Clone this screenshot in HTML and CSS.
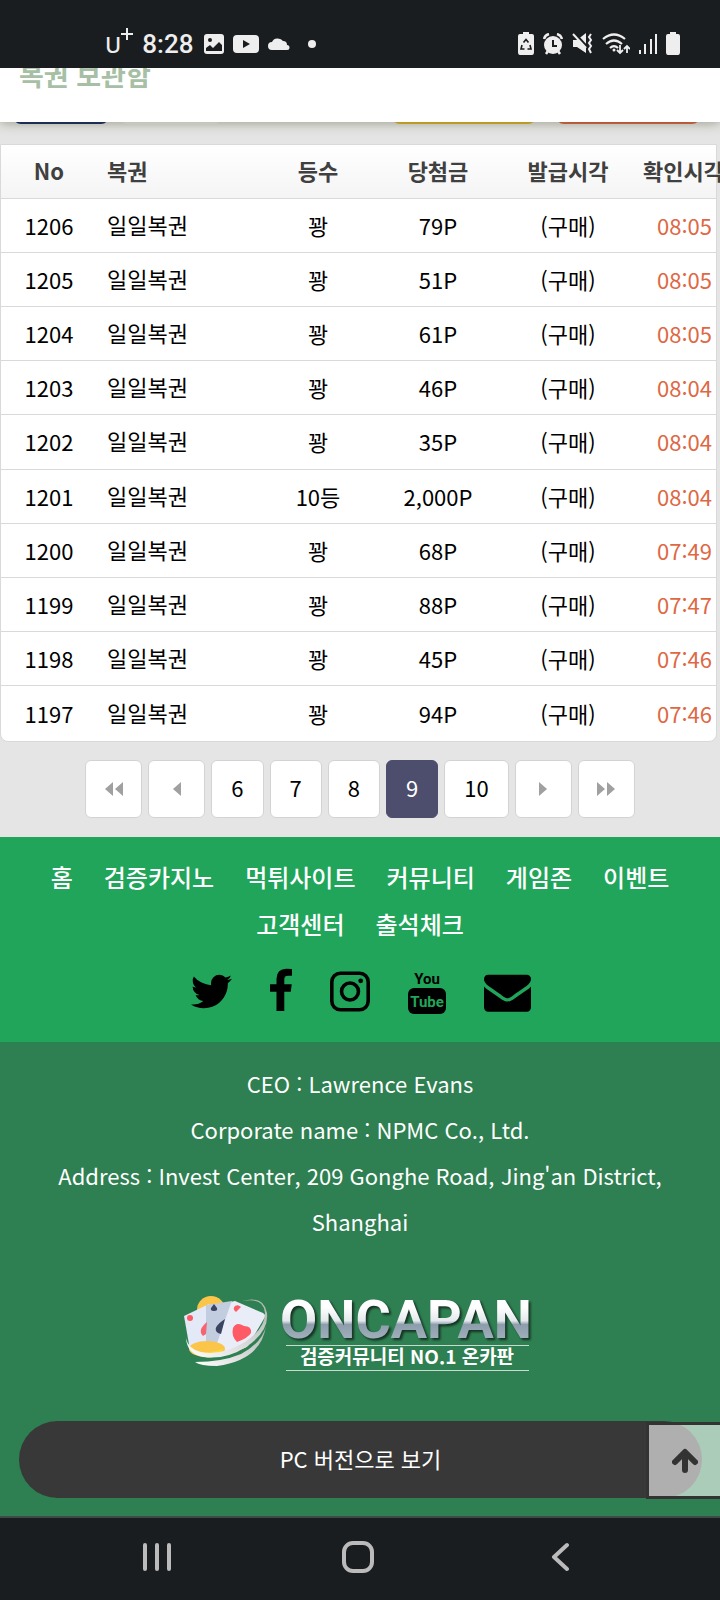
FILE: index.html
```html
<!DOCTYPE html>
<html lang="ko">
<head>
<meta charset="utf-8">
<meta name="viewport" content="width=device-width, initial-scale=1">
<title>복권 보관함</title>
<link rel="stylesheet" href="styles.css">
</head>
<body>
<div class="status">
  <div class="status-side">
    <span class="carrier">U<svg width="12" height="12" viewBox="0 0 12 12"><path d="M6 0v12M0 6h12" stroke="currentColor" stroke-width="2"/></svg></span>
    <span class="clock">8:28</span>
    <svg width="20" height="20" viewBox="0 0 20 20"><rect width="20" height="20" rx="3" fill="#eee"/><circle cx="6" cy="6" r="2" fill="#191d20"/><path d="M2 17v-3l4-3 3 3 6-6 3 3v6z" fill="#191d20"/></svg>
    <svg width="26" height="18" viewBox="0 0 26 18"><rect width="26" height="18" rx="4" fill="#eee"/><path d="M10 5l7 4-7 4z" fill="#191d20"/></svg>
    <svg width="23" height="14" viewBox="0 0 23 14"><path d="M4 13a4 4 0 0 1 0-8 6 5 0 0 1 11-1 4 4 0 0 1 4 4 2.500 2.500 0 0 1 0 5z" fill="#eee"/></svg>
    <span class="dot"></span>
  </div>
  <div class="status-side status-right">
    <svg width="16" height="23" viewBox="0 0 16 23"><path d="M5 2V0h6v2h3q2 0 2 2v16q0 3-2 3H2q-2 0-2-3V4q0-2 2-2z" fill="#eee"/><path d="M5.500 10.500L8 7.500l2.500 3M12 13l1 4h-3.500M6.500 17H3l1-4" fill="none" stroke="#191d20" stroke-width="1.600"/></svg>
    <svg width="20" height="22" viewBox="0 0 20 22"><circle cx="10" cy="12" r="9" fill="#eee"/><path d="M1 6q1-4 5-5M19 6q-1-4-5-5M5 18l-2 3M15 18l2 3" stroke="#eee" stroke-width="2.500" fill="none"/><path d="M10 7v6h4" stroke="#191d20" stroke-width="2" fill="none"/></svg>
    <svg width="21" height="21" viewBox="0 0 21 21"><path d="M1 7h4l9-7v20l-9-6H1z" fill="#eee"/><path d="M2 0l13 14" stroke="#191d20" stroke-width="3"/><path d="M1 1l13 14" stroke="#eee" stroke-width="2"/><path d="M19 1l-2 3 2 3-2 3 2 3-2 3 2 4" stroke="#eee" stroke-width="2" fill="none"/></svg>
    <svg width="28" height="22" viewBox="0 0 28 22"><path d="M1 6q11-9 22 0M4 11q8-7 16 0M8 15q4-4 8 0" stroke="#eee" stroke-width="2.200" fill="none"/><circle cx="12" cy="17" r="1.500" fill="#eee"/><path d="M18 12v8M15 17l3 3 3-3M25 20v-7M22 16l3-3 3 3" stroke="#eee" stroke-width="1.800" fill="none"/></svg>
    <svg width="18" height="20" viewBox="0 0 18 20"><path d="M1 16v4M6 10v10M12 5v15M17 0v20" stroke="#eee" stroke-width="2"/></svg>
    <svg width="14" height="23" viewBox="0 0 14 23"><path d="M4 2V0h6v2h2q2 0 2 2v16q0 3-2 3H2q-2 0-2-3V4q0-2 2-2z" fill="#eee"/></svg>
  </div>
</div>

<header class="topbar">
  <div class="topbar-clip"><h1 class="title">복권 보관함</h1></div>
</header>

<main class="content">
  <div class="tabs" aria-hidden="true">
    <span class="tab tab-navy"></span>
    <span class="tab tab-plain"></span>
    <span class="tab tab-yellow"></span>
    <span class="tab tab-red"></span>
  </div>

  <table class="tickets">
    <thead>
      <tr><th class="c-no">No</th><th class="c-name">복권</th><th class="c-rank">등수</th><th class="c-prize">당첨금</th><th class="c-issued">발급시각</th><th class="c-time">확인시각</th></tr>
    </thead>
    <tbody>
      <tr><td>1206</td><td class="c-name">일일복권</td><td>꽝</td><td>79P</td><td>(구매)</td><td class="c-time">08:05</td></tr>
      <tr><td>1205</td><td class="c-name">일일복권</td><td>꽝</td><td>51P</td><td>(구매)</td><td class="c-time">08:05</td></tr>
      <tr><td>1204</td><td class="c-name">일일복권</td><td>꽝</td><td>61P</td><td>(구매)</td><td class="c-time">08:05</td></tr>
      <tr><td>1203</td><td class="c-name">일일복권</td><td>꽝</td><td>46P</td><td>(구매)</td><td class="c-time">08:04</td></tr>
      <tr><td>1202</td><td class="c-name">일일복권</td><td>꽝</td><td>35P</td><td>(구매)</td><td class="c-time">08:04</td></tr>
      <tr><td>1201</td><td class="c-name">일일복권</td><td>10등</td><td>2,000P</td><td>(구매)</td><td class="c-time">08:04</td></tr>
      <tr><td>1200</td><td class="c-name">일일복권</td><td>꽝</td><td>68P</td><td>(구매)</td><td class="c-time">07:49</td></tr>
      <tr><td>1199</td><td class="c-name">일일복권</td><td>꽝</td><td>88P</td><td>(구매)</td><td class="c-time">07:47</td></tr>
      <tr><td>1198</td><td class="c-name">일일복권</td><td>꽝</td><td>45P</td><td>(구매)</td><td class="c-time">07:46</td></tr>
      <tr><td>1197</td><td class="c-name">일일복권</td><td>꽝</td><td>94P</td><td>(구매)</td><td class="c-time">07:46</td></tr>
    </tbody>
  </table>

  <nav class="pager" aria-label="페이지">
    <a class="page page-arrow" href="#" aria-label="처음"><svg width="18" height="14" viewBox="0 0 18 14"><path d="M8 0v14L0 7zM18 0v14L10 7z"/></svg></a>
    <a class="page page-arrow" href="#" aria-label="이전"><svg width="8" height="14" viewBox="0 0 8 14"><path d="M8 0v14L0 7z"/></svg></a>
    <a class="page" href="#">6</a>
    <a class="page" href="#">7</a>
    <a class="page" href="#">8</a>
    <a class="page page-current" href="#" aria-current="page">9</a>
    <a class="page" href="#">10</a>
    <a class="page page-arrow" href="#" aria-label="다음"><svg width="8" height="14" viewBox="0 0 8 14"><path d="M0 0v14l8-7z"/></svg></a>
    <a class="page page-arrow" href="#" aria-label="마지막"><svg width="18" height="14" viewBox="0 0 18 14"><path d="M0 0v14l8-7zM10 0v14l8-7z"/></svg></a>
  </nav>
</main>

<section class="sitemap">
  <nav class="links">
    <a href="#">홈</a><a href="#">검증카지노</a><a href="#">먹튀사이트</a><a href="#">커뮤니티</a><a href="#">게임존</a><a href="#">이벤트</a><a href="#">고객센터</a><a href="#">출석체크</a>
  </nav>
  <div class="social">
    <a href="#" aria-label="Twitter"><svg width="41" height="47" viewBox="108 0 1576 1792"><path d="M1684 408q-67 98-162 167 1 14 1 42 0 130-38 259.500t-115.500 248.500-184.500 210.500-258 146-323 54.500q-271 0-496-145 35 4 78 4 225 0 401-138-105-2-188-64.500t-114-159.500q33 5 61 5 43 0 85-11-112-23-185.500-111.500t-73.500-205.500v-4q68 38 146 41-66-44-105-115t-39-154q0-88 44-163 121 149 294.500 238.500t371.500 99.500q-8-38-8-74 0-134 94.500-228.500t228.500-94.500q140 0 236 102 109-21 205-78-37 115-142 178 93-10 186-50z"/></svg></a>
    <a href="#" aria-label="Facebook"><svg width="22" height="47" viewBox="479 0 864 1792"><path d="M1343 12v264h-157q-86 0-116 36t-30 108v189h293l-39 296h-254v759h-306v-759h-255v-296h255v-218q0-186 104-288.500t277-102.500q147 0 228 12z"/></svg></a>
    <a href="#" aria-label="Instagram"><svg width="40" height="47" viewBox="128 0 1536 1792"><rect x="197" y="197" width="1398" height="1398" rx="330" fill="none" stroke="#000" stroke-width="138"/><circle cx="896" cy="896" r="325" fill="none" stroke="#000" stroke-width="138"/><circle cx="1306" cy="486" r="92"/></svg></a>
    <a href="#" aria-label="YouTube"><svg class="yt" width="38" height="47" viewBox="0 0 38 47"><rect x="0" y="20" width="38" height="26" rx="6"/><text x="19" y="16" text-anchor="middle">You</text><text class="yt-tube" x="19" y="39" text-anchor="middle">Tube</text></svg></a>
    <a href="#" aria-label="E-mail"><svg width="47" height="47" viewBox="0 0 1792 1792"><path d="M1792 710v794q0 66-47 113t-113 47h-1472q-66 0-113-47t-47-113v-794q44 49 101 87 362 246 497 345 57 42 92.500 65.500t94.500 48 110 24.500h2q51 0 110-24.500t94.500-48 92.500-65.500q170-123 498-345 57-39 100-87zm0-294q0 79-49 151t-122 123q-376 261-468 325-10 7-42.500 31t-54 38.500-52 32.500-57.500 27-50 9h-2q-23 0-50-9t-57.500-27-52-32.500-54-38.500-42.500-31q-91-64-262-182.500t-205-142.500q-62-42-117-115.500t-55-136.500q0-78 41.500-130t118.500-52h1472q65 0 112.500 47t47.500 113z"/></svg></a>
  </div>
</section>

<footer class="footer">
  <address class="company">
    CEO : Lawrence Evans<br>
    Corporate name : NPMC Co., Ltd.<br>
    Address : Invest Center, 209 Gonghe Road, Jing'an District, Shanghai
  </address>
  <svg class="logo" width="356" height="84" viewBox="0 0 356 84" role="img" aria-label="ONCAPAN">
    <defs>
      <linearGradient id="steel" x1="0" y1="0" x2="0" y2="1"><stop offset="0.300" stop-color="#fff"/><stop offset="0.520" stop-color="#e4e9ec"/><stop offset="0.580" stop-color="#8e9dab"/><stop offset="0.900" stop-color="#a9b7c4"/></linearGradient>
      <linearGradient id="ring" x1="0" y1="1" x2="1" y2="0"><stop offset="0" stop-color="#fff"/><stop offset="0.500" stop-color="#d8d8d8"/><stop offset="1" stop-color="#a9b5ad"/></linearGradient>
    </defs>
    <circle cx="29" cy="18" r="14" fill="#fbc54a"/>
    <path d="M2 24l25-12 18 42-27 5-10-1z" fill="#e3e9f6"/>
    <path d="M24 13l26-4 10 46-36 6z" fill="#c3cde0"/>
    <path d="M49 11q1-2 4-2l28 12q3 2 2 4L66 54q-8 6-32 7l-2-1z" fill="#e9edf8"/>
    <circle cx="8" cy="26" r="3" fill="#ff5b66"/>
    <path d="M25 30q-10 8-4 14l3-2z" fill="#f5646f"/>
    <path d="M32 12l3 4q1 3-3 3-4 0-3-3z" fill="#3b4461"/>
    <path d="M43 27q-14 9-7 14l3 1z" fill="#3b4461"/>
    <path d="M53 14q3-2 6 1l-5 5q-4-3-1-6z" fill="#ff5b66"/>
    <path d="M51 36q3-6 9-3l2 1q8 0 7 7-3 5-14 9-6-6-4-14z" fill="#ff5b66"/>
    <ellipse cx="25" cy="57" rx="18" ry="8" fill="#fbc54a"/>
    <path d="M9 56q10 8 32 1l-5 7q-17 5-27-8z" fill="#f9da35"/>
    <path d="M60 9q22-4 23 12 0 16-20 29-23 14-44 10Q6 57 4 46q1 16 17 19 23 3 43-10 23-15 21-34Q82 3 60 9z" fill="url(#ring)"/>
    <path d="M84 34q-4 17-25 28-19 8-46 8 5 4 22 4Q79 68 84 34z" fill="url(#ring)"/>
    <text class="logo-name" x="224" y="46" text-anchor="middle" fill="url(#steel)">ONCAPAN</text>
    <path d="M104 53.500h243M104 78.500h243" stroke="#c4ddcf"/>
    <text class="logo-sub" x="225" y="72" text-anchor="middle">검증커뮤니티 NO.1 온카판</text>
  </svg>
  <div class="actions">
    <button class="pc" type="button">PC 버전으로 보기</button>
    <button class="to-top" type="button" aria-label="맨 위로"><svg width="26" height="26" viewBox="0 0 26 26"><path d="M3 14L13 4l10 10M13 5v17" fill="none" stroke="#333" stroke-width="6" stroke-linecap="round" stroke-linejoin="round"/></svg></button>
  </div>
</footer>

<div class="sysnav">
  <button type="button" aria-label="최근 앱"><svg width="28" height="30" viewBox="0 0 28 30"><path d="M2 3v24M14 3v24M26 3v24" stroke="#bbb" stroke-width="4" stroke-linecap="round"/></svg></button>
  <button type="button" aria-label="홈"><svg width="32" height="32" viewBox="0 0 32 32"><rect x="2" y="2" width="28" height="28" rx="9" fill="none" stroke="#bbb" stroke-width="4"/></svg></button>
  <button type="button" aria-label="뒤로"><svg width="18" height="30" viewBox="0 0 18 30"><path d="M16 3L3 15l13 12" fill="none" stroke="#bbb" stroke-width="4" stroke-linecap="round" stroke-linejoin="round"/></svg></button>
</div>
</body>
</html>
```

FILE: styles.css
```css
* { box-sizing: border-box; }

body {
  margin: 0;
  overflow-x: hidden;
  background: #e5e5e5;
  color: #000;
  font-family: "Noto Sans CJK KR", sans-serif;
  font-size: 22px;
}

a { color: inherit; text-decoration: none; }
svg { display: block; flex: none; }
button { font: inherit; }

.status {
  display: flex;
  justify-content: space-between;
  height: 68px;
  padding: 19px 40px 0 105px;
  background: #191d20;
  color: #eee;
}
.status-side { display: flex; align-items: center; gap: 9px; }
.carrier { display: flex; font-family: "Noto Sans", sans-serif; font-size: 22px; font-weight: 500; line-height: 32px; }
.clock { margin-right: 2px; font-family: Roboto, sans-serif; font-size: 26px; font-weight: 500; line-height: 32px; }
.dot { width: 8px; height: 8px; margin-left: 8px; border-radius: 50%; background: #eee; }

.topbar {
  position: relative;
  z-index: 1;
  background: #fff;
  box-shadow: 0 0 12px rgba(60, 60, 20, 0.5);
  clip-path: inset(0 0 -20px 0);
}
.topbar-clip { height: 54px; overflow: hidden; }
.title {
  margin: -13px 0 0;
  padding: 0 19px;
  color: #a6bfa5;
  font-size: 27px;
  font-weight: 700;
  line-height: 40px;
}

.tabs { display: flex; height: 36px; margin-top: -34px; padding: 0 20px 0 13px; }
.tab { height: 36px; border-radius: 8px; }
.tab-navy { width: 96px; background: #142a66; }
.tab-plain { width: 102px; margin-left: 11px; background: #eeeeec; }
.tab-yellow { width: 144px; margin-left: auto; background: #e0b624; }
.tab-red { width: 144px; margin-left: 20px; background: #dc6640; }

.tickets {
  table-layout: fixed;
  width: calc(100% - 3px);
  margin-top: 20px;
  border: 1px solid #d9d9d9;
  border-radius: 0 0 8px 8px;
  border-collapse: separate;
  border-spacing: 0;
  background: #fff;
}
.tickets th,
.tickets td {
  height: 54px;
  padding: 0 0 2px;
  border-bottom: 1px solid #d9d9d9;
  text-align: center;
  font-weight: 400;
  line-height: 32px;
  white-space: nowrap;
}
.tickets tr:nth-child(5n) td { height: 55px; }
.tickets tr:last-child td { border-bottom: 0; }
.tickets thead tr { background: linear-gradient(#fff, #f4f4f4); }
.tickets thead th { padding-bottom: 4px; border-bottom: 1px solid #d9d9d9; color: #404040; font-weight: 700; }
.tickets .c-no { width: 96px; }
.tickets .c-name { padding: 0 0 4px 10px; text-align: left; }
.tickets .c-rank { width: 130px; }
.tickets .c-prize { width: 110px; }
.tickets .c-issued { width: 150px; }
.tickets th.c-time { width: 73px; text-align: left; }
.tickets td.c-time { padding-right: 4px; color: #de6844; text-align: right; }

.pager { display: flex; justify-content: center; gap: 6px; padding: 18px 0 19px; }
.page {
  padding: 0 19px 4px;
  border: 1px solid #d3d3d3;
  border-radius: 6px;
  background: #fff;
  line-height: 52px;
}
.page-arrow { display: grid; place-items: center; width: 57px; padding: 0; fill: #a0a0a0; }
.page-current { border-color: #4d4e6d; background: #4d4e6d; color: #fff; }

.sitemap { padding: 16px 20px 27px; background: #20a55a; }
.links { display: flex; flex-wrap: wrap; justify-content: center; column-gap: 31px; color: #fff; font-size: 24px; font-weight: 500; line-height: 47px; }
.social { display: flex; justify-content: center; gap: 38px; margin-top: 21px; padding-left: 2px; }
.yt { font-family: Roboto, sans-serif; font-size: 15px; font-weight: 700; }
.yt-tube { fill: #20a55a; }

.footer { padding: 18px 0; background: #2e7f51; color: #fff; }
.company { padding: 0 40px; font-style: normal; line-height: 46px; text-align: center; }
.logo { margin: 48px auto 45px; }
.logo-name { font-family: Roboto, sans-serif; font-size: 54px; font-weight: 700; filter: drop-shadow(2px 2px 1px rgba(15, 30, 22, 0.8)); }
.logo-sub { fill: #fff; font-size: 19px; font-weight: 700; }

.actions { position: relative; padding: 0 18px 0 19px; }
.pc {
  display: block;
  width: 100%;
  padding: 21px 0 24px;
  border: 0;
  border-radius: 39px;
  background: #383838;
  color: #fff;
  line-height: 32px;
}
.to-top {
  position: absolute;
  top: 1px;
  right: -3px;
  display: grid;
  place-items: center;
  width: 77px;
  height: 77px;
  padding: 0;
  border: 3px solid #333;
  background: rgba(255, 255, 255, 0.6);
}

.sysnav {
  display: grid;
  grid-template-columns: repeat(3, 1fr);
  padding: 0 59px 0 56px;
  border-top: 2px solid #3c4a48;
  background: #191d20;
}
.sysnav button { display: grid; place-items: center; height: 82px; padding: 0 0 4px; border: 0; background: none; }
```
